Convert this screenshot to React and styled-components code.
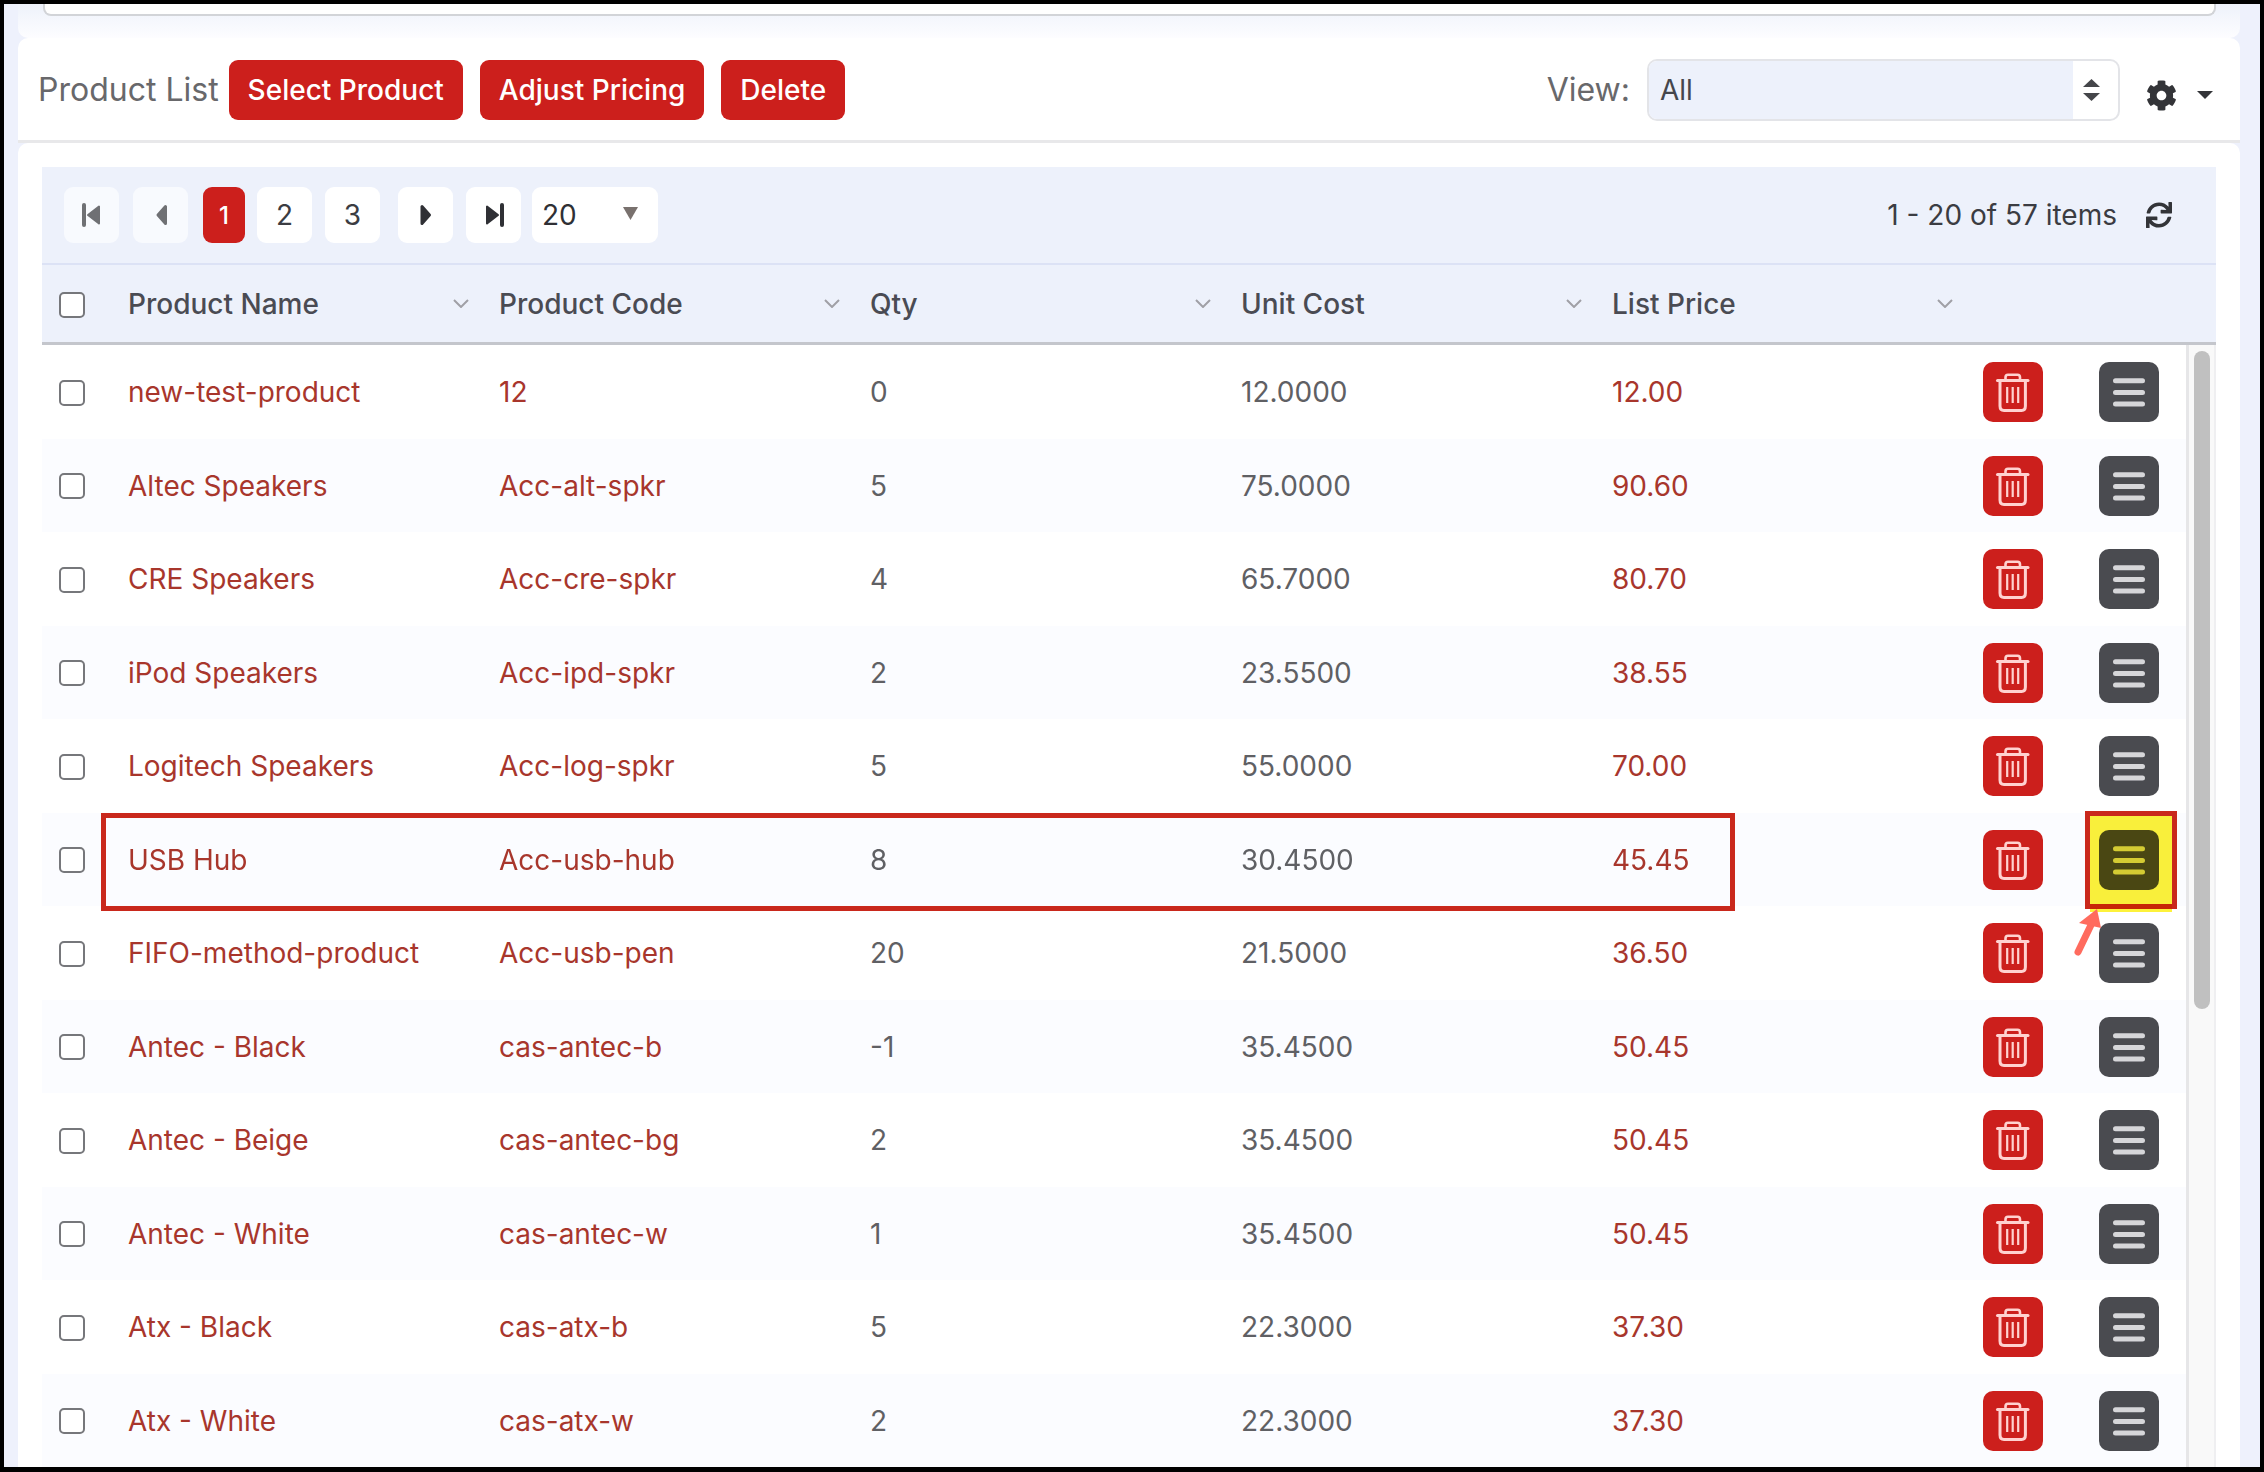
import React from 'react'
import styled, { createGlobalStyle } from 'styled-components'
import { FaCog, FaSync } from 'react-icons/fa'

const products = [
  ['new-test-product', '12', '0', '12.0000', '12.00'],
  ['Altec Speakers', 'Acc-alt-spkr', '5', '75.0000', '90.60'],
  ['CRE Speakers', 'Acc-cre-spkr', '4', '65.7000', '80.70'],
  ['iPod Speakers', 'Acc-ipd-spkr', '2', '23.5500', '38.55'],
  ['Logitech Speakers', 'Acc-log-spkr', '5', '55.0000', '70.00'],
  ['USB Hub', 'Acc-usb-hub', '8', '30.4500', '45.45'],
  ['FIFO-method-product', 'Acc-usb-pen', '20', '21.5000', '36.50'],
  ['Antec - Black', 'cas-antec-b', '-1', '35.4500', '50.45'],
  ['Antec - Beige', 'cas-antec-bg', '2', '35.4500', '50.45'],
  ['Antec - White', 'cas-antec-w', '1', '35.4500', '50.45'],
  ['Atx - Black', 'cas-atx-b', '5', '22.3000', '37.30'],
  ['Atx - White', 'cas-atx-w', '2', '22.3000', '37.30'],
]

const columns = ['Product Name', 'Product Code', 'Qty', 'Unit Cost', 'List Price']

function TrashIcon() {
  return (
    <svg width="60" height="60" viewBox="0 0 60 60" fill="none" stroke="#ffd2d0" strokeLinecap="round" strokeLinejoin="round">
      <path d="M14.5 18.5H45" strokeWidth="3" />
      <path d="M22.5 18V15.5C22.5 13.8 23.6 12.8 25 12.8H34.5C36 12.8 37 13.8 37 15.5V18" strokeWidth="2.6" />
      <path d="M17 19V44C17 47 18.6 48.4 21 48.4H38.6C41 48.4 42.4 47 42.4 44V19" strokeWidth="3" />
      <path d="M24.2 25V41M29.7 25V41M35.2 25V41" strokeWidth="2.2" strokeLinecap="butt" />
    </svg>
  )
}

function MenuIcon() {
  return (
    <svg width="60" height="60" viewBox="0 0 60 60" fill="none" stroke="#d6d6d9" strokeWidth="5" strokeLinecap="round">
      <path d="M16.5 18.8H43.5M16.5 30.4H43.5M16.5 42H43.5" />
    </svg>
  )
}

function PagerIcon({ type }) {
  const shapes = {
    first: <><path d="M2 2V22" strokeWidth="4" fill="none" strokeLinecap="round" /><path d="M17 3.5V20.5L6 12Z" strokeWidth="2" /></>,
    prev: <path d="M14.5 3.5V20.5L7 12Z" strokeWidth="3" />,
    next: <path d="M6 3.5V20.5L13.5 12Z" strokeWidth="3" />,
    last: <><path d="M3 3.5V20.5L14 12Z" strokeWidth="2" /><path d="M18 2V22" strokeWidth="4" fill="none" strokeLinecap="round" /></>,
  }
  return (
    <svg width="20" height="24" viewBox="0 0 20 24" fill="currentColor" stroke="currentColor" strokeLinejoin="round">
      {shapes[type]}
    </svg>
  )
}

function SortChevron() {
  return (
    <svg width="16" height="9" viewBox="0 0 16 9" fill="none" stroke="#a0a0a6" strokeWidth="2">
      <path d="M1 1L8 8L15 1" />
    </svg>
  )
}

function App() {
  return (
    <>
      <GlobalStyle />
      <Frame>
        <TopCard>
          <SearchEdge />
        </TopCard>
        <HeaderCard>
          <Title>Product List</Title>
          <RedButton>Select Product</RedButton>
          <RedButton>Adjust Pricing</RedButton>
          <RedButton>Delete</RedButton>
          <ViewLabel>View:</ViewLabel>
          <ViewSelect>
            <ViewValue>All</ViewValue>
            <ViewArrows>
              <svg width="17" height="22" viewBox="0 0 17 22" fill="#45464a">
                <path d="M8.5 0L17 8H0Z" />
                <path d="M0 14H17L8.5 22Z" />
              </svg>
            </ViewArrows>
          </ViewSelect>
          <GearMenu>
            <FaCog size={31} color="#333438" />
            <svg width="16" height="8" viewBox="0 0 16 8" fill="#333438">
              <path d="M0 0H16L8 8Z" />
            </svg>
          </GearMenu>
        </HeaderCard>
        <BodyCard>
          <Toolbar>
            <PagerButton $faded $gap={14}><PagerIcon type="first" /></PagerButton>
            <PagerButton $faded $gap={15}><PagerIcon type="prev" /></PagerButton>
            <ActivePage>1</ActivePage>
            <PagerButton $gap={13}>2</PagerButton>
            <PagerButton $gap={18}>3</PagerButton>
            <PagerButton $gap={13} $dark><PagerIcon type="next" /></PagerButton>
            <PagerButton $gap={11} $dark><PagerIcon type="last" /></PagerButton>
            <PageSize>
              20
              <svg width="15" height="13" viewBox="0 0 15 13" fill="#79716e">
                <path d="M0 0H15L7.5 13Z" />
              </svg>
            </PageSize>
            <ItemCount>1 - 20 of 57 items</ItemCount>
            <FaSync size={26} color="#333438" />
          </Toolbar>
          <HeadRow>
            <CheckCell><Check /></CheckCell>
            {columns.map((c) => (
              <HeadCell key={c}>
                {c}
                <SortChevron />
              </HeadCell>
            ))}
          </HeadRow>
          <RowsArea>
            <Rows>
              {products.map((p, i) => (
                <Row key={p[0]} $striped={i % 2 === 1} $marked={p[0] === 'USB Hub'}>
                  <CheckCell><Check /></CheckCell>
                  <Cell $link>{p[0]}</Cell>
                  <Cell $link>{p[1]}</Cell>
                  <Cell>{p[2]}</Cell>
                  <Cell>{p[3]}</Cell>
                  <Cell $link>{p[4]}</Cell>
                  <Actions>
                    <IconButton $red><TrashIcon /></IconButton>
                    <IconButton><MenuIcon /></IconButton>
                  </Actions>
                  {p[0] === 'USB Hub' && (
                    <>
                      <RowMark />
                      <ButtonMark />
                      <MarkArrow width="34" height="52" viewBox="0 0 34 52" fill="#ff6b5e">
                        <path d="M7 43L20 16" stroke="#ff6b5e" strokeWidth="7" strokeLinecap="round" />
                        <path d="M26 0L30 19L8 14Z" />
                      </MarkArrow>
                    </>
                  )}
                </Row>
              ))}
            </Rows>
            <ScrollTrack>
              <ScrollThumb />
            </ScrollTrack>
          </RowsArea>
        </BodyCard>
      </Frame>
    </>
  )
}

const GlobalStyle = createGlobalStyle`
  html, body {
    margin: 0;
    padding: 0;
    background: #000;
  }
  body {
    font-family: Inter, "Liberation Sans", sans-serif;
  }
`

const Frame = styled.div`
  box-sizing: border-box;
  width: 2264px;
  height: 1472px;
  border: solid #000;
  border-width: 4px 4px 5px 4px;
  background: #eef1fc;
  padding: 0 20px 0 14px;
  display: flex;
  flex-direction: column;
  overflow: hidden;
`

const TopCard = styled.div`
  flex: none;
  height: 34px;
  padding: 0 24px 0 25px;
  background: linear-gradient(#eef2fb, #fdfdff);
  border-radius: 0 0 10px 10px;
`

const SearchEdge = styled.div`
  height: 10px;
  background: #fff;
  border: 2px solid #d2d4d8;
  border-top: none;
  border-radius: 0 0 8px 8px;
`

const HeaderCard = styled.div`
  flex: none;
  box-sizing: border-box;
  height: 105px;
  padding: 1px 27px 0 20px;
  background: #fff;
  border-bottom: 3px solid #e8e8ea;
  border-radius: 10px 10px 0 0;
  display: flex;
  align-items: center;
`

const Title = styled.div`
  font-size: 32px;
  color: #68686b;
  margin-right: 10px;
`

const RedButton = styled.button`
  height: 60px;
  padding: 0 19px;
  margin-right: 17px;
  border: none;
  border-radius: 9px;
  background: #cc1f1c;
  color: #fff;
  font: 500 28px Inter, sans-serif;
`

const ViewLabel = styled.div`
  margin-left: auto;
  font-size: 32px;
  color: #68686b;
`

const ViewSelect = styled.div`
  box-sizing: border-box;
  width: 473px;
  height: 62px;
  margin: 0 26px 0 17px;
  background: #fff;
  border: 2px solid #e3e4e8;
  border-radius: 10px;
  display: flex;
  overflow: hidden;
`

const ViewValue = styled.div`
  flex: 1;
  padding-left: 11px;
  background: #edf1fb;
  font-size: 28px;
  line-height: 58px;
  color: #45464c;
`

const ViewArrows = styled.div`
  width: 45px;
  padding-left: 10px;
  box-sizing: border-box;
  display: flex;
  align-items: center;
`

const GearMenu = styled.div`
  display: flex;
  align-items: center;
  gap: 20px;
  margin-top: 11px;
  margin-right: 0;
`

const BodyCard = styled.div`
  flex: 1;
  min-height: 0;
  padding: 24px 24px 0;
  background: #fff;
  border-radius: 10px 10px 0 0;
`

const Toolbar = styled.div`
  box-sizing: border-box;
  height: 98px;
  padding: 0 44px 0 22px;
  background: #edf1fb;
  border-bottom: 2px solid #dce2f5;
  display: flex;
  align-items: center;
  color: #3b3c42;
  font-size: 28px;
`

const PagerButton = styled.div`
  width: 55px;
  height: 56px;
  margin-right: ${(p) => p.$gap}px;
  background: ${(p) => (p.$faded ? '#f8fafe' : '#fff')};
  border-radius: 9px;
  display: flex;
  align-items: center;
  justify-content: center;
  color: ${(p) => (p.$faded ? '#6f7074' : p.$dark ? '#2f3035' : '#3b3c42')};
`

const ActivePage = styled.div`
  width: 42px;
  height: 56px;
  margin-right: 12px;
  background: #cc1f1c;
  border-radius: 9px;
  display: flex;
  align-items: center;
  justify-content: center;
  color: #fff;
  font-size: 24px;
  font-weight: 500;
`

const PageSize = styled.div`
  box-sizing: border-box;
  width: 126px;
  height: 56px;
  padding: 0 20px 0 10px;
  background: #fff;
  border-radius: 9px;
  display: flex;
  align-items: center;
  justify-content: space-between;
  color: #2f3035;

  svg {
    margin-top: -4px;
  }
`

const ItemCount = styled.div`
  margin-left: auto;
  margin-right: 29px;
`

const rowColumns = '86px 371px 371px 371px 371px 371px'

const HeadRow = styled.div`
  box-sizing: border-box;
  height: 80px;
  background: #edf1fb;
  border-bottom: 3px solid #c4c6cc;
  display: grid;
  grid-template-columns: ${rowColumns} 1fr;
  align-items: center;
`

const CheckCell = styled.div`
  padding: 2px 0 0 17px;
  display: flex;
  align-items: center;
`

const Check = styled.div`
  box-sizing: border-box;
  width: 26px;
  height: 26px;
  background: #fff;
  border: 2px solid #76777b;
  border-radius: 5px;
`

const HeadCell = styled.div`
  padding-right: 30px;
  font-size: 28px;
  font-weight: 500;
  color: #4a4b53;
  display: flex;
  align-items: center;
  justify-content: space-between;
`

const RowsArea = styled.div`
  display: flex;
`

const Rows = styled.div`
  flex: 1;
  display: grid;
  grid-auto-rows: 93.5px;
`

const Row = styled.div`
  position: relative;
  z-index: ${(p) => (p.$marked ? 1 : 'auto')};
  background: ${(p) => (p.$striped ? '#fbfcff' : '#fff')};
  display: grid;
  grid-template-columns: ${rowColumns} 1fr;
  align-items: center;
`

const Cell = styled.div`
  padding-top: 1px;
  font-size: 28px;
  color: ${(p) => (p.$link ? '#a8362c' : '#5f6064')};
`

const Actions = styled.div`
  position: absolute;
  left: 1941px;
  top: 17px;
  display: flex;
  gap: 56px;
`

const IconButton = styled.div`
  width: 60px;
  height: 60px;
  border-radius: 10px;
  background: ${(p) => (p.$red ? '#cc1f1c' : '#4a4b50')};
`

const RowMark = styled.div`
  position: absolute;
  left: 59px;
  top: 0;
  box-sizing: border-box;
  width: 1634px;
  height: 98px;
  border: 5px solid #c9281c;
`

const ButtonMark = styled.div`
  position: absolute;
  left: 2043px;
  top: -2px;
  box-sizing: border-box;
  width: 92px;
  height: 98px;
  border: 5px solid #c9281c;

  &::before {
    content: '';
    position: absolute;
    inset: 0 0 -8px 0;
    background: #fdf23b;
    mix-blend-mode: multiply;
  }
`

const MarkArrow = styled.svg`
  position: absolute;
  left: 2029px;
  top: 96px;
`

const ScrollTrack = styled.div`
  flex: none;
  box-sizing: border-box;
  width: 30px;
  padding: 6px 5px 0 5px;
  background: #f9f9f9;
  border-left: 3px solid #e6e6e8;
  border-right: 2px solid #efeff1;
`

const ScrollThumb = styled.div`
  height: 658px;
  width: 16px;
  background: #c0c0c0;
  border-radius: 8px;
`

export default App
